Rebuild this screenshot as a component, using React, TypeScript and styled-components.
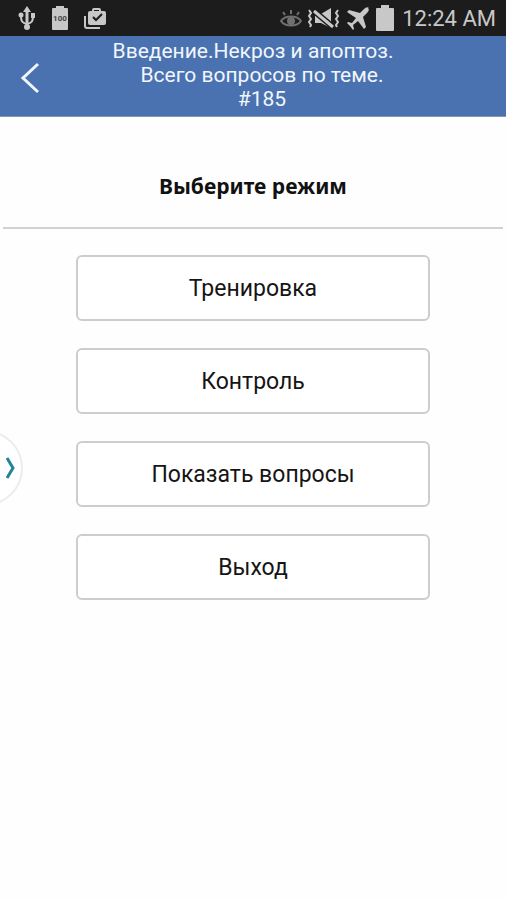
import React from "react";
import styled, { createGlobalStyle } from "styled-components";

const GlobalStyle = createGlobalStyle`
  *, *::before, *::after { box-sizing: border-box; }
  body {
    margin: 0;
    background: #fefefe;
    color: #111;
    font-family: Roboto, "Noto Sans", sans-serif;
  }
`;

const Screen = styled.div`
  position: relative;
  min-height: 100vh;
  overflow: hidden;
`;

const StatusBar = styled.div`
  display: flex;
  align-items: center;
  justify-content: space-between;
  height: 36px;
  padding: 0 10px 0 17px;
  background: #1c1c1c;
  color: #c8c8c8;
`;

const StatusGroup = styled.div<{ $gap: number }>`
  display: flex;
  align-items: center;
  gap: ${({ $gap }) => $gap}px;

  svg { display: block; }
`;

const Clock = styled.time`
  margin-left: 2px;
  padding-top: 2px;
  font-size: 22px;
  line-height: 34px;
  white-space: nowrap;
`;

const Header = styled.header`
  display: grid;
  grid-template-columns: 60px 1fr 60px;
  align-items: center;
  min-height: 81px;
  padding-bottom: 2px;
  background: #4a72b0;
  border-bottom: 1px solid #8795b5;
  color: #f2f6fc;
`;

const BackButton = styled.button`
  display: flex;
  align-items: center;
  justify-content: center;
  height: 76px;
  padding: 6px 0 0;
  border: 0;
  background: none;
  color: inherit;
  cursor: pointer;
`;

const Title = styled.h1`
  margin: 0;
  font-size: 21px;
  font-weight: 400;
  line-height: 24px;
  text-align: center;
`;

const TitleLine = styled.span<{ $indent?: boolean }>`
  display: block;
  padding-left: ${({ $indent }) => ($indent ? 18 : 0)}px;
`;

const Prompt = styled.h2`
  margin: 0 3px;
  padding: 53px 0 25px;
  border-bottom: 2px solid #d2d2d2;
  font-family: "Noto Sans", Roboto, sans-serif;
  font-size: 21px;
  font-weight: 700;
  line-height: 32px;
  text-align: center;
`;

const Menu = styled.nav`
  display: flex;
  flex-direction: column;
  gap: 27px;
  width: 70%;
  margin: 26px auto 0;
`;

const MenuButton = styled.button`
  height: 66px;
  padding: 2px 16px 0;
  border: 2px solid #cdcdcd;
  border-radius: 6px;
  background: #fff;
  color: #151515;
  font-family: inherit;
  font-size: 23px;
  line-height: 32px;
  cursor: pointer;
`;

const EdgeHandle = styled.button`
  position: absolute;
  top: 430px;
  left: -53px;
  display: flex;
  align-items: center;
  justify-content: flex-end;
  width: 76px;
  height: 76px;
  padding: 0 5px 0 0;
  border: 2px solid #ececec;
  border-radius: 50%;
  background: #fff;
  cursor: pointer;
`;

const UsbIcon = () => (
  <svg width="20" height="26" viewBox="0 0 20 26" fill="none" stroke="currentColor" strokeWidth="2">
    <path d="M10 5v18" strokeWidth="3" />
    <path d="M10 19c-5-1-6-3-6-8M10 19c5-1 6-3 6-8" />
    <path d="M10 1l4 6H6z" fill="currentColor" stroke="none" />
    <circle cx="4" cy="10" r="2.500" fill="currentColor" stroke="none" />
    <path d="M14 8h4v5h-4z" fill="currentColor" stroke="none" />
    <circle cx="10" cy="22" r="3" fill="currentColor" stroke="none" />
  </svg>
);

const BatteryLevelIcon = () => (
  <svg width="18" height="26" viewBox="0 0 18 26">
    <path d="M5 1h8v2h3q1 0 1 1v20q0 1-1 1H2q-1 0-1-1V4q0-1 1-1h3z" fill="currentColor" />
    <text x="9" y="16" textAnchor="middle" fontFamily="Roboto, sans-serif" fontSize="8" fontWeight="700" fill="#444">
      100
    </text>
  </svg>
);

const TaskBagIcon = () => (
  <svg width="24" height="24" viewBox="0 0 24 24" fill="none">
    <path d="M2 10v10q0 2 2 2h13" stroke="currentColor" strokeWidth="2" />
    <path
      fillRule="evenodd"
      d="M9 5V4q0-2 2-2h5q2 0 2 2v1h3q2 0 2 2v10q0 2-2 2H7q-2 0-2-2V7q0-2 2-2zM11 5h5V4h-5z"
      fill="currentColor"
    />
    <path d="M10 11l3 3 6-6" stroke="#1c1c1c" strokeWidth="2" />
  </svg>
);

const EyeIcon = () => (
  <svg width="22" height="20" viewBox="0 0 22 20" fill="none" stroke="#707070" strokeWidth="2">
    <path d="M1 13c4-6 16-6 20 0-4 6-16 6-20 0z" />
    <circle cx="11" cy="13" r="3" fill="#707070" />
    <path d="M11 2v4M3 4l2 3M19 4l-2 3" />
  </svg>
);

const MutedVibrateIcon = () => (
  <svg width="34" height="22" viewBox="0 0 34 22" fill="none" stroke="currentColor" strokeWidth="2">
    <path d="M2 3l2 3-2 3 2 3-2 3 2 3-1 2M31 3l-2 3 2 3-2 3 2 3-2 3 1 2" />
    <path d="M8 7h6l10-6v20l-10-5H8z" fill="currentColor" stroke="none" />
    <path d="M7 4l19 16" stroke="#1c1c1c" strokeWidth="6" />
    <path d="M7 4l19 16" strokeWidth="3" />
  </svg>
);

const PlaneIcon = () => (
  <svg width="24" height="24" viewBox="0 0 24 24" fill="currentColor">
    <path d="M22 2q2 2-1 5l-4 4 3 10-2 2-6-8-5 4 1 4-1 1-3-4-3-3 1-1 4 1 4-5-9-6 2-2 11 3 4-4q3-3 5-1z" />
  </svg>
);

const BatteryIcon = () => (
  <svg width="20" height="28" viewBox="0 0 20 28" fill="currentColor">
    <path d="M6 1h8v3h4q1 0 1 1v21q0 1-1 1H2q-1 0-1-1V5q0-1 1-1h4z" />
  </svg>
);

const modes = ["Тренировка", "Контроль", "Показать вопросы", "Выход"];

export default function App() {
  return (
    <Screen>
      <GlobalStyle />
      <StatusBar>
        <StatusGroup $gap={14}>
          <UsbIcon />
          <BatteryLevelIcon />
          <TaskBagIcon />
        </StatusGroup>
        <StatusGroup $gap={5}>
          <EyeIcon />
          <MutedVibrateIcon />
          <PlaneIcon />
          <BatteryIcon />
          <Clock>12:24 AM</Clock>
        </StatusGroup>
      </StatusBar>
      <Header>
        <BackButton type="button" aria-label="Назад">
          <svg width="20" height="32" viewBox="0 0 20 32" fill="none" stroke="currentColor" strokeWidth="3">
            <path d="M18 2L3 16l15 14" />
          </svg>
        </BackButton>
        <Title>
          <TitleLine>Введение.Некроз и апоптоз.</TitleLine>
          <TitleLine $indent>Всего вопросов по теме.</TitleLine>
          <TitleLine $indent>#185</TitleLine>
        </Title>
      </Header>
      <main>
        <Prompt>Выберите режим</Prompt>
        <Menu>
          {modes.map((mode) => (
            <MenuButton key={mode} type="button">
              {mode}
            </MenuButton>
          ))}
        </Menu>
      </main>
      <EdgeHandle type="button" aria-label="Открыть панель">
        <svg width="10" height="24" viewBox="0 0 10 24" fill="none" stroke="#23849a" strokeWidth="3">
          <path d="M1 2l6 10-6 10" />
        </svg>
      </EdgeHandle>
    </Screen>
  );
}
